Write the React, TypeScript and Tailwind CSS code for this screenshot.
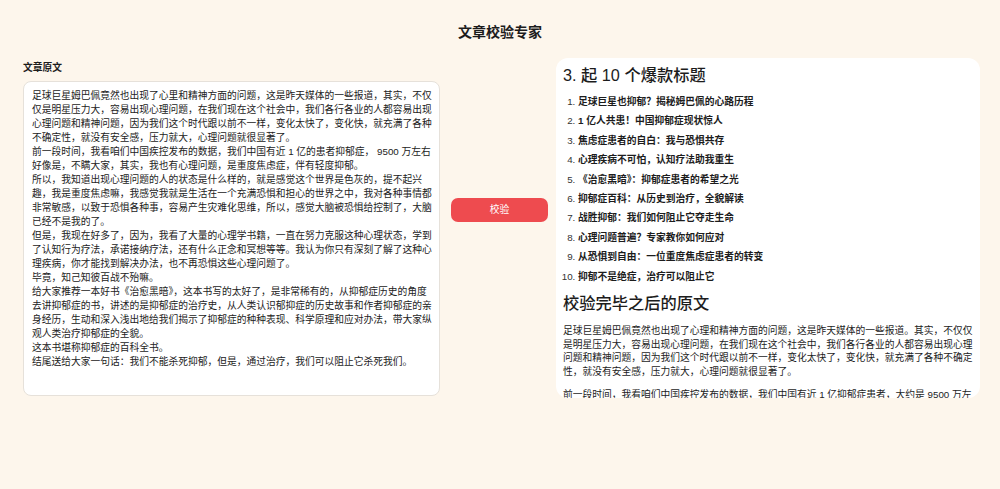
import React from "react";

const leftText = `足球巨星姆巴佩竟然也出现了心里和精神方面的问题，这是昨天媒体的一些报道，其实，不仅仅是明星压力大，容易出现心理问题，在我们现在这个社会中，我们各行各业的人都容易出现心理问题和精神问题，因为我们这个时代跟以前不一样，变化太快了，变化快，就充满了各种不确定性，就没有安全感，压力就大，心理问题就很显著了。
前一段时间，我看咱们中国疾控发布的数据，我们中国有近 1 亿的患者抑郁症， 9500 万左右好像是，不瞒大家，其实，我也有心理问题，是重度焦虑症，伴有轻度抑郁。
所以，我知道出现心理问题的人的状态是什么样的，就是感觉这个世界是色灰的，提不起兴趣，我是重度焦虑嘛，我感觉我就是生活在一个充满恐惧和担心的世界之中，我对各种事情都非常敏感，以致于恐惧各种事，容易产生灾难化思维，所以，感觉大脑被恐惧给控制了，大脑已经不是我的了。
但是，我现在好多了，因为，我看了大量的心理学书籍，一直在努力克服这种心理状态，学到了认知行为疗法，承诺接纳疗法，还有什么正念和冥想等等。我认为你只有深刻了解了这种心理疾病，你才能找到解决办法，也不再恐惧这些心理问题了。
毕竟，知己知彼百战不殆嘛。
给大家推荐一本好书《治愈黑暗》，这本书写的太好了，是非常稀有的，从抑郁症历史的角度去讲抑郁症的书，讲述的是抑郁症的治疗史，从人类认识郁抑症的历史故事和作者抑郁症的亲身经历，生动和深入浅出地给我们揭示了抑郁症的种种表现、科学原理和应对办法，带大家纵观人类治疗抑郁症的全貌。
这本书堪称抑郁症的百科全书。
结尾送给大家一句话：我们不能杀死抑郁，但是，通过治疗，我们可以阻止它杀死我们。`;

const titles = [
  "足球巨星也抑郁？揭秘姆巴佩的心路历程",
  "1 亿人共患！中国抑郁症现状惊人",
  "焦虑症患者的自白：我与恐惧共存",
  "心理疾病不可怕，认知疗法助我重生",
  "《治愈黑暗》：抑郁症患者的希望之光",
  "抑郁症百科：从历史到治疗，全貌解读",
  "战胜抑郁：我们如何阻止它夺走生命",
  "心理问题普遍？专家教你如何应对",
  "从恐惧到自由：一位重度焦虑症患者的转变",
  "抑郁不是绝症，治疗可以阻止它",
];

export default function App() {
  return (
    <div
      className="w-[1000px] h-[489px] bg-[#fdf6ec] text-[#1c1c1c] overflow-hidden"
      style={{ fontFamily: '"Liberation Sans", "Noto Sans CJK SC", sans-serif' }}
    >
      <div className="pt-[23px] text-center text-[14px] leading-[18px] font-bold">
        文章校验专家
      </div>
      <div className="mt-[17px] flex items-start pl-[23px]">
        <div className="w-[417px] pt-[3px]">
          <div className="text-[9.75px] leading-[14px] font-bold mb-[6px]">文章原文</div>
          <div className="h-[315px] bg-white border border-[#e6e1da] rounded-[8px] pl-[8px] pr-[6px] pt-[7px] overflow-hidden">
            <div className="whitespace-pre-wrap text-[9.75px] leading-[14px] text-[#222]">
              {leftText}
            </div>
          </div>
        </div>
        <div className="ml-[11px] mt-[138px] w-[97px]">
          <button className="w-[97px] h-[24px] rounded-[7px] bg-[#ee4b4f] text-white text-[9.75px]">
            校验
          </button>
        </div>
        <div className="ml-[8px] w-[424px] h-[340px] bg-white rounded-[12px] px-[7px] pt-[6px] overflow-hidden">
          <h3 className="text-[16.25px] leading-[22px] font-medium">3. 起 10 个爆款标题</h3>
          <ol className="list-decimal pl-[15px] mt-[6px] text-[9.75px] marker:text-[#333]">
            {titles.map((t) => (
              <li key={t} className="leading-[19.4px]">
                <strong className="font-semibold">{t}</strong>
              </li>
            ))}
          </ol>
          <h3 className="mt-[6px] text-[16.25px] leading-[22px] font-medium">校验完毕之后的原文</h3>
          <p className="mt-[10px] text-[9.75px] leading-[13.6px]">
            足球巨星姆巴佩竟然也出现了心理和精神方面的问题，这是昨天媒体的一些报道。其实，不仅仅是明星压力大，容易出现心理问题，在我们现在这个社会中，我们各行各业的人都容易出现心理问题和精神问题，因为我们这个时代跟以前不一样，变化太快了，变化快，就充满了各种不确定性，就没有安全感，压力就大，心理问题就很显著了。
          </p>
          <p className="mt-[10px] text-[9.75px] leading-[13.6px]">
            前一段时间，我看咱们中国疾控发布的数据，我们中国有近 1 亿抑郁症患者，大约是 9500 万左右。不瞒大家，其实，我也有心理问题，是重度焦虑症，伴有轻度抑郁。
          </p>
        </div>
      </div>
    </div>
  );
}
